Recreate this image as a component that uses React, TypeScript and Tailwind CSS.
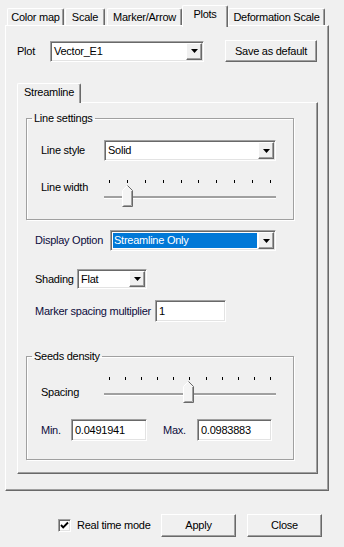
import React from "react";

const sunken =
  "border border-t-[#a0a0a0] border-l-[#a0a0a0] border-r-white border-b-white shadow-[inset_1px_1px_0_#696969,inset_-1px_-1px_0_#e3e3e3] bg-white";
const raised =
  "border border-t-white border-l-white border-r-[#696969] border-b-[#696969] shadow-[inset_-1px_-1px_0_#a0a0a0] bg-[#f0f0f0]";
const etched =
  "border border-[#a0a0a0] shadow-[inset_1px_1px_0_white,1px_1px_0_white]";

function Tab({ className, active, children }: { className: string; active?: boolean; children: React.ReactNode }) {
  if (active) {
    return (
      <div
        className={`relative z-10 h-[22px] -mb-[2px] flex justify-center pt-[2px] bg-[#f0f0f0] border-t border-l border-r border-t-white border-l-white border-r-[#696969] shadow-[inset_-1px_0_0_#a0a0a0] rounded-t-[2px] ${className}`}
      >
        {children}
      </div>
    );
  }
  return (
    <div
      className={`h-[17px] flex items-center justify-center border-t border-l border-r border-t-white border-l-white border-r-[#696969] shadow-[inset_-1px_0_0_#a0a0a0] rounded-t-[2px] ${className}`}
    >
      {children}
    </div>
  );
}

function Arrow() {
  return (
    <svg width="7" height="4" viewBox="0 0 7 4">
      <polygon points="0,0 7,0 3.5,4" fill="#000" />
    </svg>
  );
}

function Combo({ className, text, selected }: { className: string; text: string; selected?: boolean }) {
  return (
    <div className={`flex p-[1px] ${sunken} ${className}`}>
      {selected ? (
        <div className="flex-1 flex items-center m-[1px] pl-[1px] bg-[#0078d7] text-white">{text}</div>
      ) : (
        <div className="flex-1 flex items-center pl-[2px]">{text}</div>
      )}
      <div className={`w-[16px] flex items-center justify-center ${raised}`}>
        <Arrow />
      </div>
    </div>
  );
}

function Input({ className, value }: { className: string; value: string }) {
  return <div className={`flex items-center pl-[3px] text-[#000] ${sunken} ${className}`}>{value}</div>;
}

function Btn({ className, children }: { className: string; children: React.ReactNode }) {
  return <div className={`flex items-center justify-center ${raised} ${className}`}>{children}</div>;
}

function Thumb() {
  return (
    <svg width="11" height="22" viewBox="0 0 11 22">
      <path d="M0.5 21.5 V5.5 L5.5 0.5 L10.5 5.5 V21.5 Z" fill="#f4f4f4" />
      <path d="M0.5 21 V5.5 L5.5 0.5" stroke="white" fill="none" />
      <path d="M5.5 0.5 L10.5 5.5 V21.5 H0.5" stroke="#696969" fill="none" />
      <path d="M9.5 6 V20.5 H1.5" stroke="#a0a0a0" fill="none" />
    </svg>
  );
}

function Slider({ ticks, thumbLeft, thumbTop }: { ticks: number; thumbLeft: number; thumbTop: number }) {
  return (
    <div className="relative w-[172px] h-[27px]">
      <div className="flex justify-between px-[5px]">
        {Array.from({ length: ticks }).map((_, i) => (
          <div key={i} className="w-[1px] h-[3px] bg-black" />
        ))}
      </div>
      <div className="mt-[13px] h-[2px] bg-[#a0a0a0] shadow-[0_1px_0_white]" />
      <div className="absolute" style={{ left: thumbLeft, top: thumbTop }}>
        <Thumb />
      </div>
    </div>
  );
}

export default function App() {
  return (
    <div className="w-[344px] h-[547px] overflow-hidden bg-[#f0f0f0] pt-[5px] font-['Liberation_Sans',Arial,sans-serif] text-[11px] leading-[13px] tracking-[-0.25px] text-black">
      <div className="flex items-end h-[20px] pl-[7px]">
        <Tab className="w-[57px]">Color map</Tab>
        <Tab className="w-[40px] ml-[1px]">Scale</Tab>
        <Tab className="w-[75px] ml-[2px]">Marker/Arrow</Tab>
        <Tab className="w-[46px]" active>
          Plots
        </Tab>
        <Tab className="w-[97px]">Deformation Scale</Tab>
      </div>

      <div className={`ml-[5px] w-[324px] h-[466px] pt-[14px] pl-[11px] ${raised}`}>
        <div className="flex items-center h-[22px]">
          <span className="w-[33px]">Plot</span>
          <Combo className="w-[154px] h-[21px]" text="Vector_E1" />
          <Btn className="ml-[21px] w-[92px] h-[22px]">Save as default</Btn>
        </div>

        <div className="relative z-10 mt-[21px] -mb-[1px] w-[64px] h-[20px] pl-[6px] pt-[2px] bg-[#f0f0f0] border-t border-l border-r border-t-white border-l-white border-r-[#696969] shadow-[inset_-1px_0_0_#a0a0a0] rounded-t-[2px]">
          Streamline
        </div>

        <div className={`w-[301px] h-[372px] pl-[8px] ${raised}`}>
          <fieldset className={`mt-[9px] w-[268px] ${etched}`}>
            <legend className="ml-[5px] px-[2px]">Line settings</legend>
            <div className="pl-[14px] pt-[15px] pb-[12px]">
              <div className="flex items-center h-[21px]">
                <span className="w-[63px]">Line style</span>
                <Combo className="w-[172px] h-[21px]" text="Solid" />
              </div>
              <div className="flex items-start mt-[19px]">
                <span className="w-[63px] mt-[1px]">Line width</span>
                <Slider ticks={10} thumbLeft={18} thumbTop={5} />
              </div>
            </div>
          </fieldset>

          <div className="flex items-center h-[21px] mt-[10px] ml-[9px]">
            <span className="w-[75px] text-[#0c0c3c]">Display Option</span>
            <Combo className="w-[166px] h-[21px]" text="Streamline Only" selected />
          </div>

          <div className="flex items-center h-[20px] mt-[18px] ml-[9px]">
            <span className="w-[42px]">Shading</span>
            <Combo className="w-[70px] h-[20px]" text="Flat" />
          </div>

          <div className="flex items-center h-[22px] mt-[11px] ml-[9px]">
            <span className="w-[120px] text-[#0c0c3c]">Marker spacing multiplier</span>
            <Input className="w-[71px] h-[22px]" value="1" />
          </div>

          <fieldset className={`mt-[28px] w-[268px] ${etched}`}>
            <legend className="ml-[5px] px-[2px]">Seeds density</legend>
            <div className="pl-[14px] pt-[14px] pb-[18px]">
              <div className="flex items-start">
                <span className="w-[63px] mt-[9px]">Spacing</span>
                <Slider ticks={11} thumbLeft={79} thumbTop={4} />
              </div>
              <div className="flex items-center h-[22px] mt-[15px]">
                <span className="w-[30px] text-[#0c0c3c]">Min.</span>
                <Input className="w-[76px] h-[22px]" value="0.0491941" />
                <span className="w-[34px] ml-[16px] text-[#0c0c3c]">Max.</span>
                <Input className="w-[75px] h-[22px]" value="0.0983883" />
              </div>
            </div>
          </fieldset>
        </div>
      </div>

      <div className="flex items-center h-[23px] mt-[23px]">
        <div className={`ml-[58px] w-[13px] h-[13px] flex items-center justify-center ${sunken}`}>
          <svg width="9" height="9" viewBox="0 0 9 9">
            <path d="M1 4 L3.2 6.3 L8 1.5" stroke="#000" strokeWidth="1.9" fill="none" />
          </svg>
        </div>
        <span className="ml-[6px] w-[84px]">Real time mode</span>
        <Btn className="w-[75px] h-[23px]">Apply</Btn>
        <Btn className="ml-[11px] w-[75px] h-[23px]">Close</Btn>
      </div>
    </div>
  );
}
